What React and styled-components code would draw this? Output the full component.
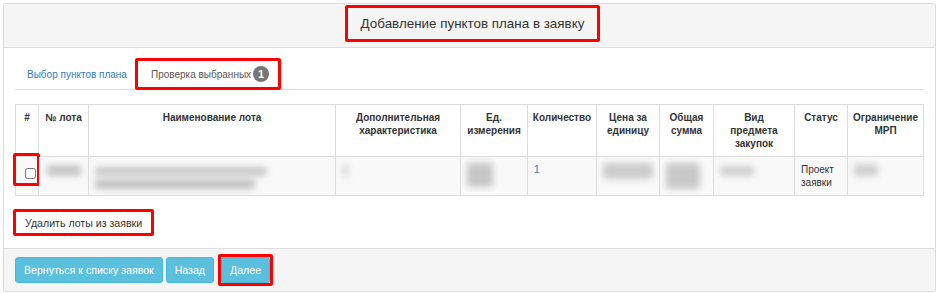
import React from "react";
import styled, { createGlobalStyle } from "styled-components";

const Global = createGlobalStyle`
  html, body { margin: 0; padding: 0; background: #fff; }
  body { font-family: "Liberation Sans", Arial, sans-serif; color: #333; }
  * { box-sizing: border-box; }
`;

const Page = styled.div`
  padding: 3px 1px 0 3px;
  width: 937px;
`;

const Panel = styled.div`
  width: 933px;
  border: 1px solid #ddd;
  border-radius: 2px;
  background: #fff;
`;

const Heading = styled.div`
  height: 44px;
  background: #f5f5f5;
  border-bottom: 1px solid #ddd;
  display: flex;
  justify-content: center;
  align-items: flex-start;
  padding: 1px 0 0 6px;
`;

const Marked = styled.div`
  border: 3px solid #f00;
  border-radius: 2px;
`;

const Title = styled(Marked)`
  height: 37px;
  padding: 0 13px 0 13px;
  display: flex;
  align-items: center;
  font-size: 13.4px;
  color: #333;
`;

const Body = styled.div`
  padding: 9px 11px 12px 11px;
`;

const Tabs = styled.div`
  display: flex;
  align-items: flex-end;
  border-bottom: 1px solid #ddd;
  height: 33px;
`;

const TabLink = styled.div`
  font-size: 10px;
  color: #337ab7;
  padding: 0 8px 9px 12px;
`;

const ActiveTab = styled(Marked)`
  height: 32px;
  display: flex;
  align-items: center;
  padding: 0 9px 0 13px;
  font-size: 10px;
  color: #555;
  gap: 2px;
  margin-bottom: -1px;
`;

const Badge = styled.span`
  display: inline-flex;
  width: 16px;
  height: 16px;
  border-radius: 8px;
  background: #777;
  color: #fff;
  font-weight: bold;
  font-size: 11px;
  align-items: center;
  justify-content: center;
`;

const Table = styled.table`
  margin-top: 14px;
  width: 908px;
  table-layout: fixed;
  border-collapse: collapse;
  font-size: 10px;
  line-height: 13px;
`;

const Th = styled.th`
  width: ${(p) => p.$w}px;
  border: 1px solid #ddd;
  padding: 6px 4px 6px 4px;
  font-weight: bold;
  text-align: center;
  vertical-align: top;
  color: #333;
`;

const Td = styled.td`
  border: 1px solid #ddd;
  padding: 6px 5px 6px 6px;
  background: #f9f9f9;
  vertical-align: top;
  position: relative;
  color: ${(p) => (p.$blue ? "#337ab7" : "#333")};
  height: 39px;
`;

const Blur = styled.span`
  display: block;
  width: ${(p) => p.$w}px;
  height: ${(p) => p.$h}px;
  margin: ${(p) => p.$m || "0"};
  background: ${(p) => p.$c || "#c6c6c6"};
  filter: blur(3px);
  border-radius: 3px;
`;

const Check = styled.input`
  margin: 5px 0 0 3px;
  width: 11px;
  height: 11px;
`;

const CheckMark = styled.div`
  position: absolute;
  left: -3px;
  top: -4px;
  width: 27px;
  height: 33px;
  border: 3px solid #f00;
  border-radius: 2px;
  pointer-events: none;
`;

const DeleteButton = styled(Marked)`
  display: inline-flex;
  align-items: center;
  margin: 13px 0 0 -2px;
  height: 27px;
  padding: 0 9px 0 9px;
  font-size: 10.6px;
  color: #333;
  background: #fff;
`;

const Footer = styled.div`
  background: #f5f5f5;
  border-top: 1px solid #ddd;
  height: 43px;
  display: flex;
  align-items: center;
  gap: 3px;
  padding: 0 0 0 11px;
`;

const InfoButton = styled.div`
  height: 26px;
  display: flex;
  align-items: center;
  padding: 0 ${(p) => p.$px || 10}px;
  background: #5bc0de;
  border: 1px solid #46b8da;
  border-radius: 3px;
  color: #fff;
  font-size: 10.6px;
`;

const ButtonMark = styled(Marked)`
  margin-left: 1px;
  padding: 0;
`;

const cols = [
  ["#", 23],
  ["№ лота", 50],
  ["Наименование лота", 247],
  ["Дополнительная характеристика", 125],
  ["Ед. измерения", 67],
  ["Количество", 69],
  ["Цена за единицу", 63],
  ["Общая сумма", 54],
  ["Вид предмета закупок", 81],
  ["Статус", 53],
  ["Ограничение МРП", 76],
];

export default function App() {
  return (
    <>
      <Global />
      <Page>
        <Panel>
          <Heading>
            <Title>Добавление пунктов плана в заявку</Title>
          </Heading>
          <Body>
            <Tabs>
              <TabLink>Выбор пунктов плана</TabLink>
              <ActiveTab>
                Проверка выбранных <Badge>1</Badge>
              </ActiveTab>
            </Tabs>
            <Table>
              <thead>
                <tr>
                  {cols.map(([t, w]) => (
                    <Th key={t} $w={w}>
                      {t === "Вид предмета закупок" ? (
                        <>Вид<br />предмета<br />закупок</>
                      ) : t}
                    </Th>
                  ))}
                </tr>
              </thead>
              <tbody>
                <tr>
                  <Td>
                    <Check type="checkbox" readOnly />
                    <CheckMark />
                  </Td>
                  <Td><Blur $w={34} $h={11} $m="2px 0 0 2px" /></Td>
                  <Td>
                    <Blur $w={172} $h={9} $m="4px 0 0 0" $c="#c8c8c8" />
                    <Blur $w={160} $h={10} $m="3px 0 0 0" $c="#c2c2c2" />
                  </Td>
                  <Td><Blur $w={7} $h={12} $m="2px 0 0 0" $c="#ddd" /></Td>
                  <Td><Blur $w={26} $h={24} $m="0 0 0 0" /></Td>
                  <Td $blue>1</Td>
                  <Td><Blur $w={50} $h={16} $m="0 0 0 0" $c="#ccc" /></Td>
                  <Td><Blur $w={34} $h={26} $m="0 0 0 0" $c="#c9c9c9" /></Td>
                  <Td><Blur $w={34} $h={10} $m="3px 0 0 0" $c="#cfcfcf" /></Td>
                  <Td>Проект<br />заявки</Td>
                  <Td><Blur $w={24} $h={12} $m="1px 0 0 0" $c="#d0d0d0" /></Td>
                </tr>
              </tbody>
            </Table>
            <DeleteButton>Удалить лоты из заявки</DeleteButton>
          </Body>
          <Footer>
            <InfoButton $px={8}>Вернуться к списку заявок</InfoButton>
            <InfoButton $px={8}>Назад</InfoButton>
            <ButtonMark>
              <InfoButton $px={8}>Далее</InfoButton>
            </ButtonMark>
          </Footer>
        </Panel>
      </Page>
    </>
  );
}
